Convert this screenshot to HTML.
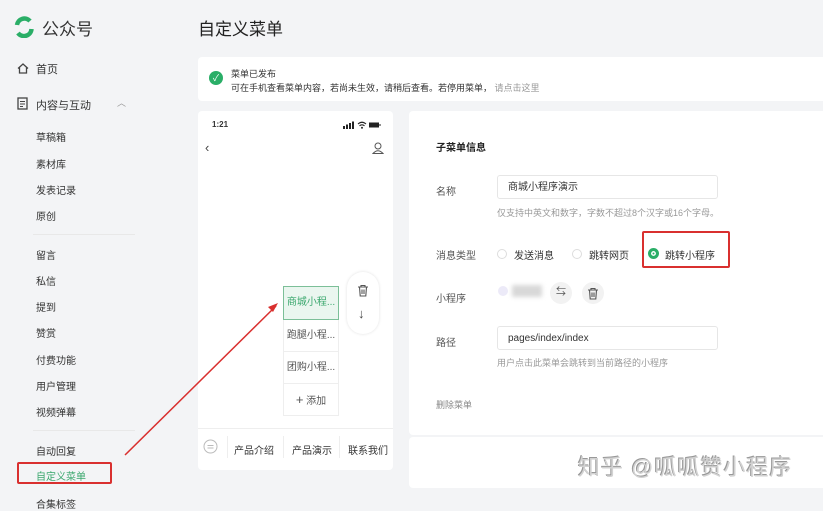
<!DOCTYPE html>
<html><head><meta charset="utf-8"><style>
*{margin:0;padding:0;box-sizing:border-box}
body{width:823px;height:500px;background:#f3f4f6;font-family:"Liberation Sans","Noto Sans CJK SC",sans-serif;color:#333;position:relative;overflow:hidden}
.a{position:absolute;white-space:nowrap}
.s{font-size:10px;color:#333}
.card{position:absolute;background:#fff;border-radius:4px}
.g{color:#999}
.inp{position:absolute;border:1px solid #e6e6e6;background:#fff;border-radius:3px;font-size:10px;padding:0 10px;line-height:24px}
.radio{position:absolute;width:10px;height:10px;border-radius:50%;border:1px solid #ddd;background:#fff}
.mi{position:absolute;left:283px;width:56px;height:32px;border:1px solid #eee;border-top:none;background:#fff;font-size:10px;color:#555;text-align:center;line-height:32px}
</style></head><body>
<!-- logo -->
<svg class="a" style="left:13px;top:16px" width="22" height="22" viewBox="0 0 22 22"><path d="M4 9 A7.5 7.5 0 0 1 17 5" fill="none" stroke="#2aae67" stroke-width="4.5"/><path d="M18.5 13 A7.5 7.5 0 0 1 5 17" fill="none" stroke="#2aae67" stroke-width="4.5"/></svg>
<div class="a" style="left:42px;top:15px;font-size:17px;color:#333">公众号</div>
<svg class="a" style="left:17px;top:63px" width="12" height="11" viewBox="0 0 12 11"><path d="M1 5.5 L6 1 L11 5.5 M2.5 4.5 V10 H9.5 V4.5" fill="none" stroke="#444" stroke-width="1.3"/></svg>
<div class="a" style="left:36px;top:61px;font-size:11px">首页</div>
<svg class="a" style="left:17px;top:97px" width="11" height="13" viewBox="0 0 11 13"><rect x="1" y="1" width="9" height="11" fill="none" stroke="#444" stroke-width="1.3"/><path d="M3 4.5H8M3 7H8M3 9.5H6" stroke="#444"/></svg>
<div class="a" style="left:36px;top:97px;font-size:11px">内容与互动</div>
<div class="a g" style="left:117px;top:96px;font-size:9px">︿</div>
<div class="a s" style="left:36px;top:129px">草稿箱</div>
<div class="a s" style="left:36px;top:156px">素材库</div>
<div class="a s" style="left:36px;top:182px">发表记录</div>
<div class="a s" style="left:36px;top:208px">原创</div>
<div class="a" style="left:33px;top:234px;width:102px;height:1px;background:#e8e8e8"></div>
<div class="a s" style="left:36px;top:247px">留言</div>
<div class="a s" style="left:36px;top:273px">私信</div>
<div class="a s" style="left:36px;top:299px">提到</div>
<div class="a s" style="left:36px;top:325px">赞赏</div>
<div class="a s" style="left:36px;top:352px">付费功能</div>
<div class="a s" style="left:36px;top:378px">用户管理</div>
<div class="a s" style="left:36px;top:404px">视频弹幕</div>
<div class="a" style="left:33px;top:430px;width:102px;height:1px;background:#e8e8e8"></div>
<div class="a s" style="left:36px;top:443px">自动回复</div>
<div class="a" style="left:17px;top:462px;width:95px;height:22px;border:2px solid #d9302f;border-radius:2px"></div>
<div class="a s" style="left:36px;top:468px;color:#3aa76d">自定义菜单</div>
<div class="a s" style="left:36px;top:496px">合集标签</div>

<div class="a" style="left:198px;top:15px;font-size:17px;color:#222">自定义菜单</div>
<div class="card" style="left:198px;top:57px;width:640px;height:44px"></div>
<div class="a" style="left:209px;top:71px;width:14px;height:14px;border-radius:50%;background:#2aae67;color:#fff;font-size:9px;text-align:center;line-height:14px">✓</div>
<div class="a s" style="left:231px;top:67px;font-size:9px">菜单已发布</div>
<div class="a s" style="left:231px;top:81px;font-size:9px">可在手机查看菜单内容，若尚未生效，请稍后查看。若停用菜单， <span class="g">请点击这里</span></div>

<!-- phone -->
<div class="card" style="left:198px;top:111px;width:195px;height:359px"></div>
<div class="a" style="left:212px;top:120px;font-size:8px;font-weight:bold">1:21</div>
<svg class="a" style="left:343px;top:121px" width="38" height="8" viewBox="0 0 38 8"><rect x="0" y="5" width="2" height="3" fill="#222"/><rect x="3" y="3.5" width="2" height="4.5" fill="#222"/><rect x="6" y="2" width="2" height="6" fill="#222"/><rect x="9" y="0.5" width="2" height="7.5" fill="#222"/><path d="M15 3 Q19 -0.5 23 3 M16.5 4.8 Q19 2.8 21.5 4.8" fill="none" stroke="#222" stroke-width="1.1"/><circle cx="19" cy="6.8" r="1" fill="#222"/><rect x="26" y="1.5" width="10" height="5" fill="#222"/><rect x="36.5" y="3" width="1" height="2" fill="#222"/></svg>
<div class="a" style="left:205px;top:140px;font-size:13px;color:#444">‹</div>
<svg class="a" style="left:372px;top:142px" width="12" height="12" viewBox="0 0 12 12"><circle cx="6" cy="4" r="3" fill="none" stroke="#555"/><path d="M1 11.5 Q6 6 11 11.5Z" fill="none" stroke="#555"/></svg>
<div class="a" style="left:347px;top:272px;width:32px;height:62px;border-radius:16px;background:#fff;box-shadow:0 0 3px rgba(0,0,0,.12)"></div>
<svg class="a" style="left:357px;top:284px" width="12" height="13" viewBox="0 0 12 13"><path d="M1 3H11M4 3V1.5H8V3M2.5 3L3.2 12H8.8L9.5 3M5 5.5V10M7 5.5V10" fill="none" stroke="#555" stroke-width="1.1"/></svg>
<div class="a" style="left:358px;top:306px;font-size:13px;color:#444">↓</div>
<div class="a" style="left:283px;top:286px;width:56px;height:34px;border:1px solid #7cbf98;background:#eaf6ef;font-size:10px;color:#3aa76d;text-align:center;line-height:32px">商城小程...</div>
<div class="mi" style="top:320px">跑腿小程...</div>
<div class="mi" style="top:352px">团购小程...</div>
<div class="mi" style="top:384px"><span style="font-size:13px">+</span> 添加</div>
<div class="a" style="left:198px;top:428px;width:195px;height:1px;background:#eee"></div>
<svg class="a" style="left:203px;top:439px" width="15" height="15" viewBox="0 0 15 15"><circle cx="7.5" cy="7.5" r="6.5" fill="none" stroke="#bbb"/><path d="M4.5 6.5H10.5M4.5 9H10.5" stroke="#bbb"/></svg>
<div class="a s" style="left:234px;top:442px">产品介绍</div>
<div class="a s" style="left:292px;top:442px">产品演示</div>
<div class="a s" style="left:348px;top:442px">联系我们</div>
<div class="a" style="left:227px;top:436px;width:1px;height:22px;background:#eee"></div>
<div class="a" style="left:283px;top:436px;width:1px;height:22px;background:#eee"></div>
<div class="a" style="left:339px;top:436px;width:1px;height:22px;background:#eee"></div>

<!-- arrow -->
<svg class="a" style="left:0;top:0" width="823" height="500"><line x1="125" y1="455" x2="276" y2="306" stroke="#d9302f" stroke-width="1.5"/><path d="M278 303 L268 307 L273 312Z" fill="#d9302f"/></svg>

<!-- right panel -->
<div class="card" style="left:409px;top:111px;width:420px;height:324px"></div>
<div class="card" style="left:409px;top:437px;width:420px;height:51px"></div>
<div class="a" style="left:436px;top:139px;font-size:10px;font-weight:bold;color:#222">子菜单信息</div>
<div class="a s" style="left:436px;top:183px;color:#555">名称</div>
<div class="inp" style="left:497px;top:175px;width:221px;height:24px">商城小程序演示</div>
<div class="a g" style="left:497px;top:206px;font-size:9px">仅支持中英文和数字，字数不超过8个汉字或16个字母。</div>
<div class="a s" style="left:436px;top:247px;color:#555">消息类型</div>
<div class="radio" style="left:497px;top:249px"></div>
<div class="a s" style="left:514px;top:247px">发送消息</div>
<div class="radio" style="left:572px;top:249px"></div>
<div class="a s" style="left:589px;top:247px">跳转网页</div>
<div class="a" style="left:642px;top:231px;width:88px;height:37px;border:2px solid #d9302f;border-radius:2px"></div>
<div class="a" style="left:648px;top:248px;width:11px;height:11px;border-radius:50%;background:#2aae67;border:3px solid #2aae67;box-shadow:inset 0 0 0 1.5px #fff"></div>
<div class="a s" style="left:665px;top:247px">跳转小程序</div>
<div class="a s" style="left:436px;top:290px;color:#555">小程序</div>
<div class="a" style="left:498px;top:286px;width:10px;height:10px;border-radius:50%;background:#eceaf8"></div>
<div class="a" style="left:512px;top:285px;width:30px;height:12px;background:#d8d8d8;filter:blur(2px)"></div>
<div class="a" style="left:550px;top:282px;width:22px;height:22px;border-radius:50%;background:#f2f2f2;font-size:10px;text-align:center;line-height:22px;color:#555">⇆</div>
<div class="a" style="left:582px;top:282px;width:22px;height:22px;border-radius:50%;background:#f2f2f2"></div>
<svg class="a" style="left:587px;top:287px" width="12" height="13" viewBox="0 0 12 13"><path d="M1 3H11M4 3V1.5H8V3M2.5 3L3.2 12H8.8L9.5 3M5 5.5V10M7 5.5V10" fill="none" stroke="#555" stroke-width="1.1"/></svg>
<div class="a s" style="left:436px;top:334px;color:#555">路径</div>
<div class="inp" style="left:497px;top:326px;width:221px;height:24px">pages/index/index</div>
<div class="a g" style="left:497px;top:356px;font-size:9px">用户点击此菜单会跳转到当前路径的小程序</div>
<div class="a g" style="left:436px;top:398px;font-size:9px;color:#888">删除菜单</div>
<div class="a" style="left:578px;top:450px;font-size:22px;color:#d2d2d2;letter-spacing:1px;text-shadow:-1px -1px 0 #999"> 知乎 @呱呱赞小程序</div>
</body></html>
